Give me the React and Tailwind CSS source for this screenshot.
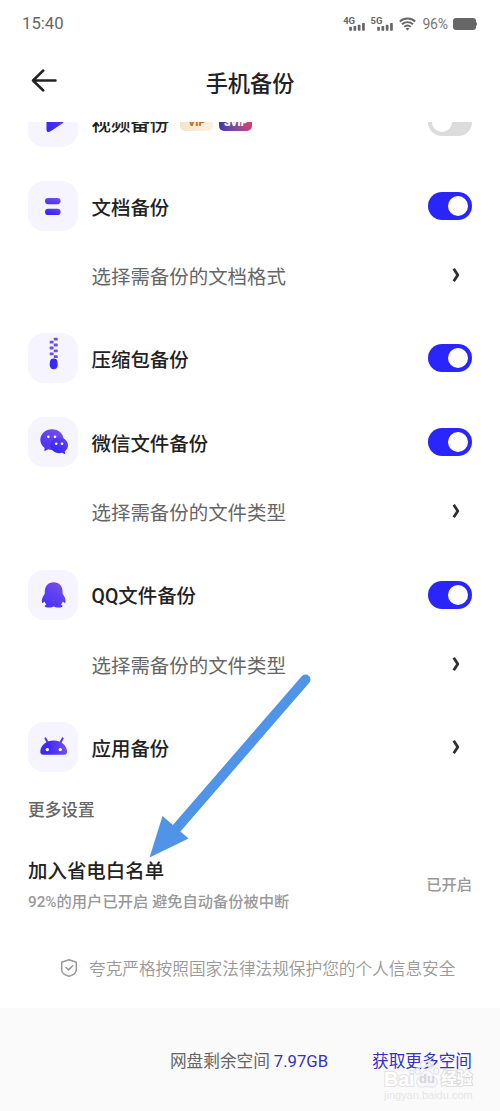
import clsx from 'clsx';

const PlayIcon = () => (
  <svg width="50" height="50" viewBox="0 0 50 50">
    <path d="M18.500 18c0-1.800 1.600-2.600 3-1.800l12.500 6.900c2 1.100 1.700 2.400.3 3.500L22.200 34.500c-2 1-3.700.2-3.700-1.600z" fill="url(#purple)" />
  </svg>
);

const DocIcon = () => (
  <svg width="50" height="50" viewBox="0 0 50 50">
    <rect x="17" y="17" width="15.6" height="6.2" rx="3.1" fill="url(#violet)" />
    <rect x="17" y="27.8" width="15.6" height="6.2" rx="3.1" fill="url(#purple)" />
  </svg>
);

const ZipIcon = () => (
  <svg width="50" height="50" viewBox="0 0 50 50" fill="#6a50e8">
    <rect x="25.8" y="4.8" width="3.9" height="2.8" rx="0.6" />
    <rect x="21.7" y="7.8" width="3.9" height="2.8" rx="0.6" />
    <rect x="25.8" y="10.6" width="3.9" height="2.8" rx="0.6" />
    <rect x="21.7" y="13.6" width="3.9" height="2.8" rx="0.6" />
    <rect x="25.8" y="16.5" width="3.9" height="2.8" rx="0.6" />
    <rect x="21.7" y="19.5" width="3.9" height="2.8" rx="0.6" />
    <rect x="25.8" y="22.3" width="3.9" height="2.8" rx="0.6" />
    <path d="M21.900 29c.2-2.400 1.500-3.500 3.800-3.500s3.600 1.100 3.800 3.500l.2 2.900c0 2.600-1.800 4.300-4 4.300s-4-1.700-4-4.300z" fill="#3a2af5" />
  </svg>
);

const WechatIcon = () => (
  <svg width="50" height="50" viewBox="0 0 50 50">
    <path d="M24 12.2c-6.500 0-11.700 4.700-11.700 10.500 0 3.300 1.700 6.200 4.300 8.100l-.3 3.500 3.900-2c1.200.4 2.500.6 3.800.6 6.500 0 11.700-4.500 11.700-10.200S30.500 12.200 24 12.200z" fill="url(#violet)" />
    <path d="M32 21.200c-4.900 0-8.800 3.500-8.800 7.900s3.900 7.900 8.800 7.900c1.100 0 2.100-.2 3-.5l2.900 1.500-.2-3.100c2-1.400 3.100-3.500 3.100-5.800 0-4.400-3.900-7.900-8.800-7.900z" transform="translate(-.8 -.8)" fill="url(#purple)" />
    <g fill="#fff">
      <circle cx="20.400" cy="19.800" r="1.300" />
      <circle cx="27" cy="19.800" r="1.300" />
      <circle cx="28.200" cy="26.800" r="1.300" />
      <circle cx="34" cy="26.800" r="1.300" />
    </g>
  </svg>
);

const QQIcon = () => (
  <svg width="50" height="50" viewBox="0 0 50 50">
    <path
      d="M25.700 12.300C20 12.300 16.800 16.500 16.800 21.500V23.500C15.200 26 13.800 28.500 13.800 31 13.800 32.400 14.200 33 14.800 32.900 15.500 32.800 16.100 32.300 16.600 31.600 17 32.900 17.600 33.900 18.500 34.700 17.300 35 16.800 35.500 16.800 36.100 16.800 37.200 18.600 37.600 21 37.600 23 37.600 24.500 37.200 25.200 36.500H26.200C26.900 37.200 28.400 37.600 30.400 37.600 32.800 37.600 34.600 37.200 34.600 36.100 34.600 35.500 34.100 35 32.900 34.700 33.800 33.900 34.400 32.900 34.800 31.600 35.300 32.300 35.900 32.800 36.600 32.900 37.200 33 37.600 32.400 37.600 31 37.600 28.500 36.200 26 34.600 23.500V21.500C34.600 16.500 31.400 12.300 25.700 12.300Z"
      fill="url(#violet)"
    />
  </svg>
);

const AndroidIcon = () => (
  <svg width="50" height="50" viewBox="0 0 50 50">
    <path d="M17.500 16.400l2.600 4.800M34.600 16.400 32 21.200" stroke="#5438ee" strokeWidth="2" strokeLinecap="round" />
    <path d="M12.300 28.900c.8-6 6.200-10.300 13.400-10.300s12.600 4.300 13.400 10.300c.3 2.200-.8 3.800-3 3.800H15.300c-2.200 0-3.300-1.600-3-3.800z" fill="url(#flat)" />
    <circle cx="19.300" cy="27.600" r="1.700" fill="#fff" />
    <circle cx="32.300" cy="27.600" r="1.700" fill="#fff" />
  </svg>
);

const Gradients = () => (
  <svg width="0" height="0" className="absolute">
    <defs>
      <linearGradient id="purple" x1="0.1" y1="0.900" x2="0.900" y2="0">
        <stop offset="0.2" stopColor="#3b28fb" />
        <stop offset="1" stopColor="#6244ee" />
      </linearGradient>
      <linearGradient id="violet" x1="0.200" y1="1" x2="0.800" y2="0">
        <stop offset="0" stopColor="#4630fa" />
        <stop offset="1" stopColor="#7650e4" />
      </linearGradient>
      <linearGradient id="flat" x1="0" y1="0" x2="1" y2="0">
        <stop offset="0.300" stopColor="#4029fb" />
        <stop offset="1" stopColor="#7450ea" />
      </linearGradient>
    </defs>
  </svg>
);

const Chevron = () => (
  <svg width="8" height="16" viewBox="0 0 8 16" fill="none" className="mr-3">
    <path d="M1.700 1.800 5.800 8l-4.100 6.200" stroke="#303030" strokeWidth="2.800" strokeLinejoin="round" />
  </svg>
);

const Toggle = ({ on }) => (
  <div className={clsx('flex h-7 w-[44.500px] items-center rounded-full', on ? 'justify-end bg-[#2a25fb] pr-1' : 'justify-start bg-[#dcdcdc] pl-1')}>
    <div className="size-5 rounded-full bg-white" />
  </div>
);

const Signal = ({ label }) => (
  <div className="flex items-end">
    <span className="-mr-1.5 self-start text-[9.500px] leading-[8px] font-bold">{label}</span>
    <svg width="17" height="14" viewBox="0 0 17 14" fill="#666">
      <rect x="0.200" y="9.800" width="2.700" height="3.900" rx="0.600" />
      <rect x="4.500" y="9" width="2.700" height="4.700" rx="0.600" />
      <rect x="8.800" y="7.800" width="2.700" height="5.900" rx="0.600" />
      <rect x="13.100" y="6" width="2.700" height="7.700" rx="0.600" />
    </svg>
  </div>
);

const StatusBar = () => (
  <div className="flex h-12 items-center justify-between pr-[22px] pl-[22px] text-[#666]">
    <span className="text-[16.700px]">15:40</span>
    <div className="flex items-center">
      <Signal label="4G" />
      <div className="w-[4.500px]" />
      <Signal label="5G" />
      <svg width="17" height="14" viewBox="0 0 17 14" fill="none" stroke="#666" strokeWidth="1.900" className="ml-[5px]">
        <path d="M.8 4.500c4.300-4 11.100-4 15.400 0M3 7.300c3.100-2.900 7.900-2.900 11 0M5.200 9.900c1.900-1.700 4.700-1.700 6.600 0" />
        <path d="M6.600 11.400c1.100-.8 2.700-.8 3.800 0l-1.900 2.200z" fill="#666" stroke="none" />
      </svg>
      <span className="ml-[7px] w-[26px] text-sm tracking-[-0.300px] text-[#777]">96%</span>
      <div className="ml-1 h-3 w-[23px] rounded-[3px] bg-[#666]" />
      <div className="mr-px h-1 w-[1.500px] rounded-r bg-[#888]" />
    </div>
  </div>
);

const items = [
  { name: '视频备份', icon: PlayIcon, toggle: true, on: false, vip: true },
  { name: '文档备份', icon: DocIcon, toggle: true, on: true, sub: '选择需备份的文档格式' },
  { name: '压缩包备份', icon: ZipIcon, toggle: true, on: true },
  { name: '微信文件备份', icon: WechatIcon, toggle: true, on: true, sub: '选择需备份的文件类型' },
  { name: 'QQ文件备份', icon: QQIcon, toggle: true, on: true, sub: '选择需备份的文件类型' },
  { name: '应用备份', icon: AndroidIcon },
];

const BackupItem = ({ item }) => {
  const Icon = item.icon;
  return (
    <>
      <div className="flex h-[83.400px] items-center">
        <div className="size-[50px] rounded-2xl bg-[#f5f4ff]">
          <Icon />
        </div>
        <span className="mt-[5px] ml-[13.500px] text-[19.440px] font-medium text-[#222]">{item.name}</span>
        {item.vip && (
          <div className="mt-0.5 ml-[11px] flex gap-1.5 text-[10.500px] leading-4 font-black">
            <span className="h-4 w-[33px] rounded-[5px] bg-linear-to-r from-[#f8e3c8] to-[#fdf1e2] text-center text-[#b8752f]">VIP</span>
            <span className="h-4 w-[33px] rounded-[5px] bg-linear-to-r from-[#3d35ae] to-[#d83b72] text-center text-white">SVIP</span>
          </div>
        )}
        <div className="ml-auto">{item.toggle ? <Toggle on={item.on} /> : <Chevron />}</div>
      </div>
      {item.sub && (
        <div className="flex h-[69.400px] items-center justify-between pb-3.5 pl-[63.500px]">
          <span className="mt-[5px] text-[19.440px] text-[#666]">{item.sub}</span>
          <Chevron />
        </div>
      )}
    </>
  );
};

// faint paw-and-wordmark overlay in the bottom corner
const Watermark = () => (
  <div className="absolute top-[1067px] left-[384px] w-[92px]">
    <div className="flex h-[23px] items-center font-['Liberation_Sans','Noto_Sans_CJK_SC',sans-serif] whitespace-nowrap">
      <span className="w-[31px] text-[20px] font-bold tracking-[-0.300px] text-white [paint-order:stroke] [-webkit-text-stroke:2px_#e2e2e2]">Bai</span>
      <div className="relative flex h-5 w-[24px] items-center justify-center">
        <svg width="26" height="30" viewBox="0 0 28 32" className="absolute -top-2.5 -left-px" fill="#f4f4fb" fillOpacity="0.850" stroke="#dcdce6" strokeWidth="0.900">
          <ellipse cx="4" cy="13" rx="2.800" ry="3.700" />
          <ellipse cx="10" cy="6" rx="2.900" ry="4" />
          <ellipse cx="18" cy="6" rx="2.900" ry="4" />
          <ellipse cx="24" cy="13" rx="2.800" ry="3.700" />
          <path d="M14 12c5 0 6 5 9 8s3 9-2 10c-3 .6-4-.5-7-.5s-4 1.100-7 .5c-5-1-5-7-2-10s4-8 9-8z" />
        </svg>
        <span className="relative text-[13px] font-bold text-[#d4d4dc]">du</span>
      </div>
      <span className="ml-0.5 text-[16px] font-bold tracking-[-0.500px] text-white [paint-order:stroke] [-webkit-text-stroke:2px_#dcdcdc]">经验</span>
    </div>
    <div className="-mt-px font-['Liberation_Sans',sans-serif] text-[11px] leading-3 whitespace-nowrap text-[#e6e6e6]">jingyan.baidu.com</div>
  </div>
);

export default function App() {
  return (
    <div className="relative flex h-[1111px] w-[500px] flex-col overflow-hidden bg-white font-['Roboto','Noto_Sans_CJK_SC',sans-serif]">
      <Gradients />
      <StatusBar />
      <header className="grid h-[74px] grid-cols-3 px-7">
        <svg width="32" height="26" viewBox="0 0 32 26" fill="none" stroke="#222" strokeWidth="2.500" strokeLinecap="round" strokeLinejoin="round" className="mt-5">
          <path d="M15.300 2.500 5 12.500l10.300 10M5 12.500h22.500" />
        </svg>
        <h1 className="mt-5 text-center text-[22.200px] leading-8 font-medium text-[#222]">手机备份</h1>
      </header>

      <main className="flex-1 overflow-hidden px-7">
        <div className="-mt-[41.500px]">
          {items.map((item) => (
            <BackupItem key={item.name} item={item} />
          ))}
        </div>
        <div className="mt-2.5 text-[16.670px] leading-6 font-medium text-[#666]">更多设置</div>
        <div className="mt-[33px] flex items-center justify-between">
          <div>
            <div className="text-[19.440px] leading-8 font-medium text-[#222]">加入省电白名单</div>
            <div className="text-[15.280px] leading-7 font-medium text-[#999]">92%的用户已开启 避免自动备份被中断</div>
          </div>
          <span className="-mt-0.5 text-[15.280px] font-medium text-[#999]">已开启</span>
        </div>
        <div className="mt-10 flex items-center pl-8">
          <svg width="18" height="20" viewBox="0 0 18 20" fill="none" stroke="#999" strokeWidth="1.500" strokeLinecap="round" strokeLinejoin="round" className="-mt-0.5">
            <path d="M9 1.700 16.300 4.200v7.300c0 3.700-3.400 5.800-7.300 6.800-3.900-1-7.300-3.100-7.300-6.800V4.200z" />
            <path d="m6 9.500 2.600 2.400 4.100-4.100" />
          </svg>
          <span className="mt-px ml-[11px] text-[16.670px] font-[350] whitespace-nowrap text-[#999]">夸克严格按照国家法律法规保护您的个人信息安全</span>
        </div>
      </main>

      <footer className="flex h-[103px] items-center justify-end bg-[#fafafa] px-7 pt-[3px] text-[16.670px]">
        <span className="text-[#666]">网盘剩余空间</span>
        <span className="ml-1 text-[#3431c4]">7.97GB</span>
        <span className="ml-11 text-[#3431c4]">获取更多空间</span>
      </footer>

      <Watermark />

      {/* pointer to the whitelist entry */}
      <svg width="170" height="190" viewBox="0 0 170 190" className="absolute top-[672px] left-[145px]">
        <path d="M160.500 7.500 31 157" stroke="#5094e8" strokeWidth="10" strokeLinecap="round" />
        <path d="M4.500 185.500 17.500 144 43.500 166.500z" fill="#5094e8" />
      </svg>
    </div>
  );
}
